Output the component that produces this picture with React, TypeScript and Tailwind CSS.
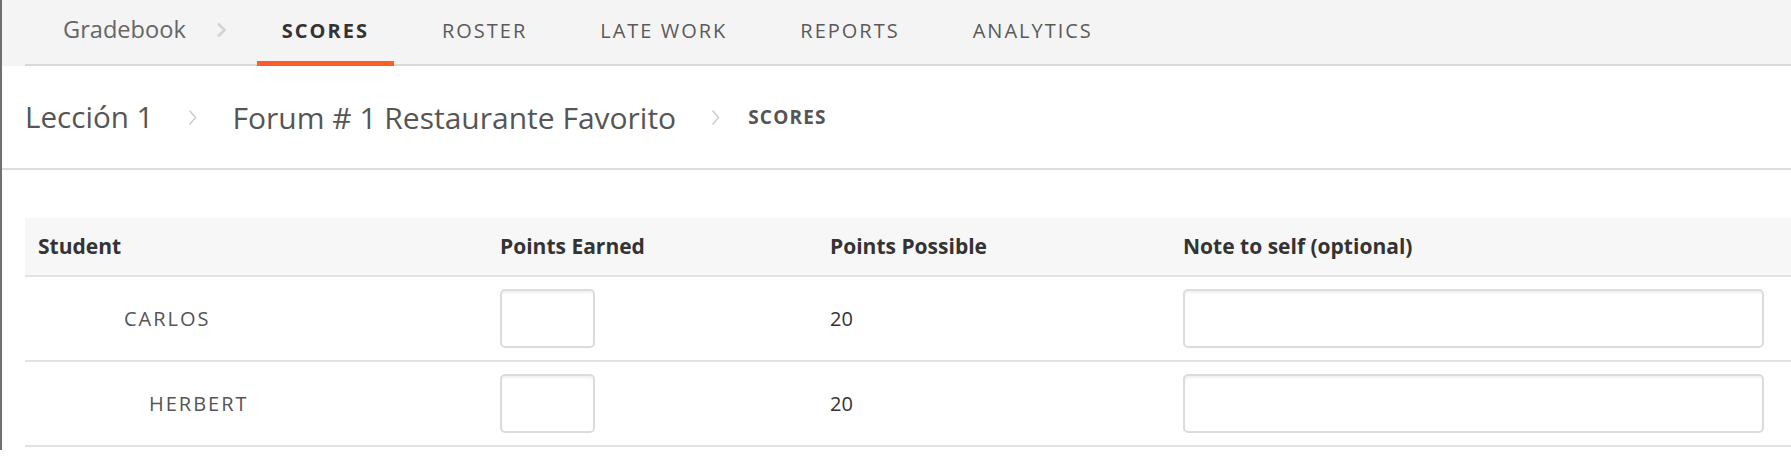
const tabs = ["SCORES", "ROSTER", "LATE WORK", "REPORTS", "ANALYTICS"];

const students = [
  { name: "CARLOS", indent: "pl-[99px]", possible: 20 },
  { name: "HERBERT", indent: "pl-[124px]", possible: 20 },
];

function Crumb({ className }: { className: string }) {
  return (
    <svg width="9" height="17" viewBox="0 0 9 17" className={`shrink-0 ${className}`}>
      <path d="M1.5 1.5 L7.5 8.5 L1.5 15.5" fill="none" stroke="#cfcfcf" strokeWidth="1.6" />
    </svg>
  );
}

export default function App() {
  return (
    <div
      className="flex min-h-[470px] bg-white text-[#555]"
      style={{ fontFamily: '"Open Sans", "Noto Sans", sans-serif' }}
    >
      <div className="h-[450px] w-[2px] shrink-0 bg-[#707070]" />

      <div className="flex-1 min-w-0">
        {/* top nav */}
        <div className="bg-[#f4f4f4] pl-[23px]">
          <div className="flex h-[66px] items-stretch border-b-2 border-[#d9d9d9]">
            <div className="flex items-center pb-[5px] pl-[38px]">
              <span className="text-[23.6px] text-[#666]">Gradebook</span>
              <svg width="11" height="16" viewBox="0 0 11 16" className="ml-[30px] mr-[30px]">
                <path d="M2 1.5 L8.5 8 L2 14.5" fill="none" stroke="#d4d4d4" strokeWidth="2.6" />
              </svg>
            </div>
            <div className="flex gap-[23px]">
              {tabs.map((t, i) => (
                <div
                  key={t}
                  className={
                    i === 0
                      ? "-mb-[2px] flex items-center border-b-[5px] border-[#ff5c26] px-[25px] text-[20px] font-bold tracking-[2px] text-[#333]"
                      : "-mb-[2px] flex items-center border-b-[5px] border-transparent px-[25px] text-[20px] tracking-[2px] text-[#5a5a5a]"
                  }
                >
                  {t}
                </div>
              ))}
            </div>
          </div>
        </div>

        {/* breadcrumb */}
        <div className="flex h-[104px] items-center border-b-2 border-[#dedede] pl-[23px]">
          <span className="text-[29.6px] text-[#555]">Lección 1</span>
          <Crumb className="mx-[35px]" />
          <span className="text-[30px] text-[#555]">Forum # 1 Restaurante Favorito</span>
          <Crumb className="ml-[35px] mr-[28px]" />
          <span className="text-[19px] font-bold tracking-[1.2px] text-[#555]">SCORES</span>
        </div>

        {/* scores table */}
        <div className="ml-[23px] mt-[48px]">
          <div className="grid h-[59px] grid-cols-[462px_330px_353px_1fr] items-center border-b-2 border-[#e2e2e2] bg-[#f7f7f7] text-[21px] font-bold text-[#333]">
            <div className="pl-[13px]">Student</div>
            <div className="pl-[13px]">Points Earned</div>
            <div className="pl-[13px]">Points Possible</div>
            <div className="pl-[13px]">Note to self (optional)</div>
          </div>

          {students.map((s) => (
            <div
              key={s.name}
              className="grid h-[85px] grid-cols-[462px_330px_353px_1fr] items-center border-b-2 border-[#e2e2e2]"
            >
              <div className={`${s.indent} text-[20px] tracking-[2px] text-[#555]`}>{s.name}</div>
              <div className="pl-[13px]">
                <input
                  type="text"
                  className="h-[59px] w-[95px] rounded-[5px] border-2 border-[#dcdcdc] bg-white shadow-[inset_0_2px_2px_rgba(0,0,0,0.06)] outline-none"
                />
              </div>
              <div className="pl-[13px] text-[20px] text-[#333]">{s.possible}</div>
              <div className="pl-[13px] pr-[27px]">
                <input
                  type="text"
                  className="h-[59px] w-full rounded-[5px] border-2 border-[#dcdcdc] bg-white shadow-[inset_0_2px_2px_rgba(0,0,0,0.06)] outline-none"
                />
              </div>
            </div>
          ))}
        </div>
      </div>
    </div>
  );
}
